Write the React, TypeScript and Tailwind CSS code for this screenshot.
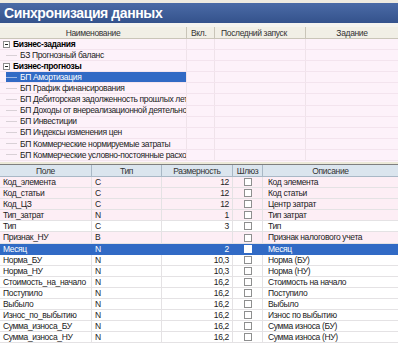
const topRows = [
  { t: "Бизнес-задания", group: true },
  { t: "БЗ Прогнозный баланс" },
  { t: "Бизнес-прогнозы", group: true },
  { t: "БП Амортизация", sel: true },
  { t: "БП График финансирования" },
  { t: "БП Дебиторская задолженность прошлых лет" },
  { t: "БП Доходы от внереализационной деятельности" },
  { t: "БП Инвестиции" },
  { t: "БП Индексы изменения цен" },
  { t: "БП Коммерческие нормируемые затраты" },
  { t: "БП Коммерческие условно-постоянные расходы" },
];

type Field = { f: string; t: string; s: string; d: string; pink?: boolean; sel?: boolean };

const fields: Field[] = [
  { f: "Код_элемента", t: "C", s: "12", d: "Код элемента", pink: true },
  { f: "Код_статьи", t: "C", s: "12", d: "Код статьи", pink: true },
  { f: "Код_ЦЗ", t: "C", s: "12", d: "Центр затрат", pink: true },
  { f: "Тип_затрат", t: "N", s: "1", d: "Тип затрат", pink: true },
  { f: "Тип", t: "C", s: "3", d: "Тип" },
  { f: "Признак_НУ", t: "B", s: "", d: "Признак налогового учета", pink: true },
  { f: "Месяц", t: "N", s: "2", d: "Месяц", sel: true },
  { f: "Норма_БУ", t: "N", s: "10,3", d: "Норма (БУ)" },
  { f: "Норма_НУ", t: "N", s: "10,3", d: "Норма (НУ)" },
  { f: "Стоимость_на_начало", t: "N", s: "16,2", d: "Стоимость на начало" },
  { f: "Поступило", t: "N", s: "16,2", d: "Поступило" },
  { f: "Выбыло", t: "N", s: "16,2", d: "Выбыло" },
  { f: "Износ_по_выбытию", t: "N", s: "16,2", d: "Износ по выбытию" },
  { f: "Сумма_износа_БУ", t: "N", s: "16,2", d: "Сумма износа (БУ)" },
  { f: "Сумма_износа_НУ", t: "N", s: "16,2", d: "Сумма износа (НУ)" },
];

function TopTable() {
  return (
    <div className="h-[135px] overflow-hidden bg-[#fdf2fa]">
      <div className="grid h-[12px] grid-cols-[187px_28px_91px_1fr] border-b border-[#c9c5b8] bg-[#f1efe6] text-[#333]">
        <div className="border-r border-[#c9c5b8] text-center leading-[12px]">Наименование</div>
        <div className="border-r border-[#c9c5b8] pl-[4px] leading-[12px]">Вкл.</div>
        <div className="border-r border-[#c9c5b8] pl-[6px] leading-[12px]">Последний запуск</div>
        <div className="text-center leading-[12px]">Задание</div>
      </div>
      {topRows.map((r, i) => (
        <div key={i} className="grid h-[11.1px] grid-cols-[187px_28px_91px_1fr] border-b border-[#f3e4ee]">
          <div className="relative flex items-center overflow-hidden whitespace-nowrap border-r border-[#efe3ea]">
            {r.group ? (
              <>
                <span className="ml-[3px] flex h-[7px] w-[7px] shrink-0 items-center justify-center border border-[#8c8c8c] bg-white">
                  <span className="h-px w-[3px] bg-[#222]" />
                </span>
                <span className="ml-[3px] font-bold text-black">{r.t}</span>
              </>
            ) : (
              <div className={`ml-[6px] flex h-full flex-1 items-center ${r.sel ? "bg-[#316ac5] text-white" : "text-[#222]"}`}>
                <span className={`h-px w-[11px] shrink-0 ${r.sel ? "bg-[#9db7e3]" : "bg-[#d8d0d6]"}`} />
                <span className="ml-[3px]">{r.t}</span>
              </div>
            )}
          </div>
          <div className="border-r border-[#efe3ea]" />
          <div className="border-r border-[#efe3ea]" />
          <div />
        </div>
      ))}
    </div>
  );
}

function Check({ on }: { on?: boolean }) {
  return <span className={`block h-[8px] w-[8px] border ${on ? "border-white bg-white" : "border-[#8e8f8f] bg-white"}`} />;
}

function BottomTable() {
  return (
    <div>
      <div className="grid h-[12px] grid-cols-[92px_70px_71px_30px_1fr] border-b border-[#a9b8c6] bg-[#dbe5ee] text-[#333]">
        <div className="border-r border-[#a9b8c6] text-center leading-[12px]">Поле</div>
        <div className="border-r border-[#a9b8c6] text-center leading-[12px]">Тип</div>
        <div className="border-r border-[#a9b8c6] text-center leading-[12px]">Размерность</div>
        <div className="border-r border-[#a9b8c6] text-center leading-[12px]">Шлюз</div>
        <div className="text-center leading-[12px]">Описание</div>
      </div>
      {fields.map((r, i) => {
        const bg = r.sel ? "bg-[#316ac5] text-white" : r.pink ? "bg-[#fdeef5] text-[#222]" : "bg-white text-[#222]";
        const line = r.sel ? "border-[#316ac5]" : "border-[#e4e2e4]";
        return (
          <div key={i} className={`grid h-[11.1px] grid-cols-[92px_70px_71px_30px_1fr] border-b ${line} ${bg}`}>
            <div className={`overflow-hidden whitespace-nowrap border-r ${line} pl-[3px] leading-[10px]`}>{r.f}</div>
            <div className={`border-r ${line} pl-[3px] leading-[10px]`}>{r.t}</div>
            <div className={`border-r ${line} pr-[3px] text-right leading-[10px]`}>{r.s}</div>
            <div className={`flex items-center justify-center border-r ${line}`}>
              <Check on={r.sel} />
            </div>
            <div className="overflow-hidden whitespace-nowrap pl-[5px] leading-[10px]">{r.d}</div>
          </div>
        );
      })}
    </div>
  );
}

export default function App() {
  return (
    <div className="h-[343px] w-[398px] overflow-hidden bg-white text-[8.5px] tracking-[-0.35px] [font-family:'Liberation_Sans',Arial,sans-serif]">
      <div className="h-[3px] bg-[#efebe0]" />
      <div className="flex h-[20px] items-center bg-gradient-to-b from-[#4b6ba6] to-[#34528c] pl-[4px]">
        <span className="text-[14px] font-bold tracking-[-0.4px] text-white">Синхронизация данных</span>
      </div>
      <div className="h-[4px] bg-[#f4f3ef]" />
      <TopTable />
      <div className="h-[3px] border-b border-[#7f7f7f] bg-[#ece9d8]" />
      <BottomTable />
    </div>
  );
}
